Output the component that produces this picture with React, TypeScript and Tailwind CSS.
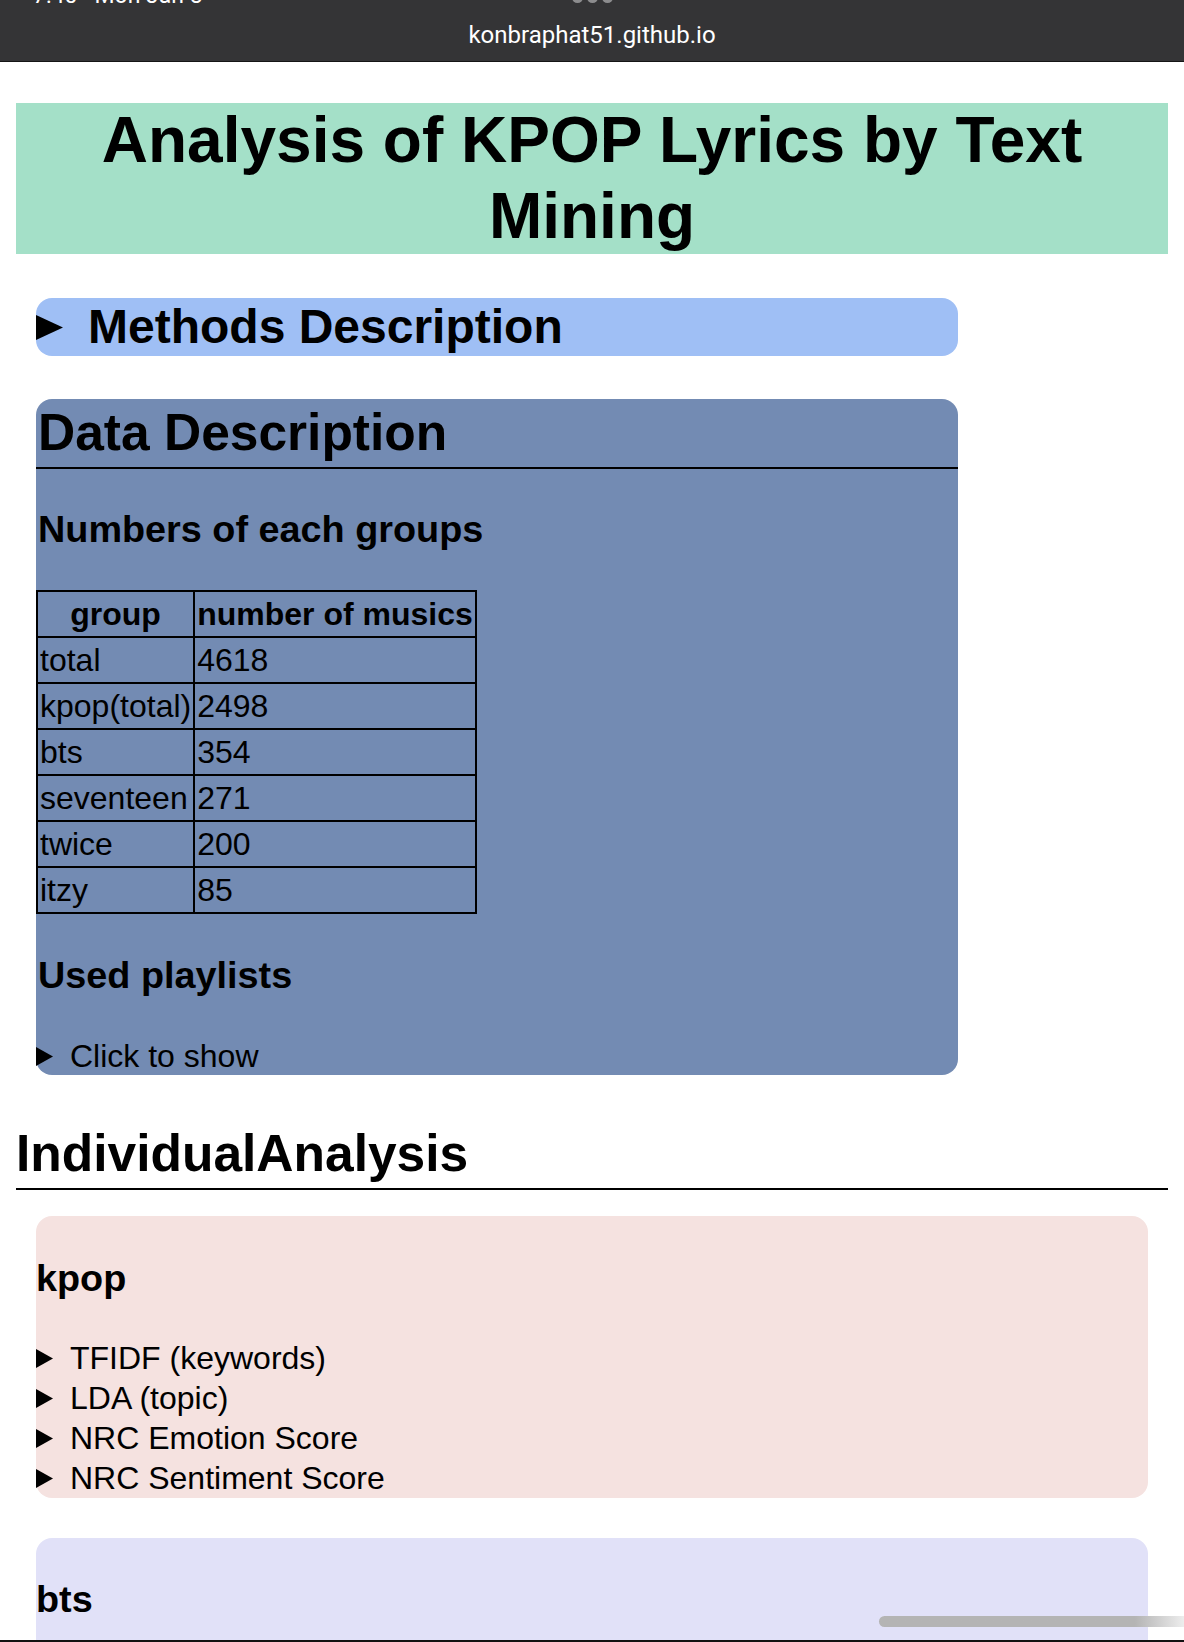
import React from "react";

const Tri = ({ w, h }: { w: number; h: number }) => (
  <svg width={w} height={h} viewBox={`0 0 ${w} ${h}`} className="shrink-0">
    <polygon points={`0,0 ${w},${h / 2} 0,${h}`} fill="#000" />
  </svg>
);

const rows: [string, string][] = [
  ["total", "4618"],
  ["kpop(total)", "2498"],
  ["bts", "354"],
  ["seventeen", "271"],
  ["twice", "200"],
  ["itzy", "85"],
];

const items = ["TFIDF (keywords)", "LDA (topic)", "NRC Emotion Score", "NRC Sentiment Score"];

export default function App() {
  return (
    <div className="relative w-[1184px] h-[1642px] overflow-hidden bg-white text-black font-['Liberation_Sans',Arial,sans-serif]">
      {/* Browser top bar */}
      <div className="h-[62px] bg-[#343436] border-b border-[#151515] flex flex-col overflow-hidden">
        <div className="h-[6px] flex items-start">
          <div className="w-[394px] pl-[33px] -mt-[16px]">
            <span className="block text-white text-[23px] leading-[23px] font-['Roboto',sans-serif] whitespace-pre">7:40   Mon Jan 8</span>
          </div>
          <div className="w-[396px] flex justify-center gap-[4px] -mt-[8px]">
            <span className="w-[11px] h-[11px] rounded-full bg-[#8c8c8e]" />
            <span className="w-[11px] h-[11px] rounded-full bg-[#8c8c8e]" />
            <span className="w-[11px] h-[11px] rounded-full bg-[#8c8c8e]" />
          </div>
        </div>
        <div className="flex-1 flex items-center justify-center pt-[2px]">
          <span className="text-white text-[24px] leading-[30px] font-['Roboto',sans-serif]">konbraphat51.github.io</span>
        </div>
      </div>

      <div className="px-4">
        {/* Title */}
        <h1 className="mt-[41px] bg-[#a4e0c8] text-center font-bold text-[64px] leading-[75.5px]">
          Analysis of KPOP Lyrics by Text Mining
        </h1>

        {/* Methods Description */}
        <div className="mt-[44px] ml-[20px] w-[922px] h-[58px] bg-[#9fbff5] rounded-[16px] flex items-center">
          <Tri w={27} h={25} />
          <h2 className="ml-[25px] text-[48px] font-bold leading-none">Methods Description</h2>
        </div>

        {/* Data Description */}
        <div className="mt-[43px] ml-[20px] w-[922px] bg-[#738bb3] rounded-[16px]">
          <h2 className="h-[70px] flex items-center border-b-2 border-black text-[51.5px] font-bold leading-none pl-[2px]">
            Data Description
          </h2>
          <h3 className="mt-[39px] mb-[39px] text-[37.8px] font-bold leading-[43px] pl-[2px]">Numbers of each groups</h3>
          <table className="border-collapse border-2 border-black text-[32px] leading-[38px]">
            <thead>
              <tr className="h-[46px]">
                <th className="border-2 border-black w-[157px] px-[2px] py-0 font-bold text-center">group</th>
                <th className="border-2 border-black w-[282px] px-[2px] py-0 font-bold text-left whitespace-nowrap">number of musics</th>
              </tr>
            </thead>
            <tbody>
              {rows.map(([g, n]) => (
                <tr key={g} className="h-[46px]">
                  <td className="border-2 border-black px-[2px] py-0">{g}</td>
                  <td className="border-2 border-black px-[2px] py-0">{n}</td>
                </tr>
              ))}
            </tbody>
          </table>
          <h3 className="mt-[40px] text-[37.8px] font-bold leading-[43px] pl-[2px]">Used playlists</h3>
          <div className="mt-[40px] h-[38px] flex items-center">
            <Tri w={17} h={19} />
            <span className="ml-[17px] text-[32px] leading-none">Click to show</span>
          </div>
        </div>

        {/* Individual Analysis */}
        <h2 className="mt-[45px] h-[70px] flex items-center border-b-2 border-black text-[51.5px] font-bold leading-none">
          IndividualAnalysis
        </h2>

        <div className="mt-[26px] mx-[20px] bg-[#f5e2e0] rounded-[16px]">
          <h3 className="pt-[41px] text-[37.8px] font-bold leading-[43px]">kpop</h3>
          <div className="mt-[38px]">
            {items.map((t) => (
              <div key={t} className="h-[40px] flex items-center">
                <Tri w={17} h={19} />
                <span className="ml-[17px] text-[32px] leading-none">{t}</span>
              </div>
            ))}
          </div>
        </div>

        <div className="mt-[40px] mx-[20px] bg-[#e1e1f8] rounded-[16px] h-[200px]">
          <h3 className="pt-[40px] text-[37.8px] font-bold leading-[43px]">bts</h3>
        </div>
      </div>

      {/* scroll indicator overlay */}
      <div className="absolute left-[879px] top-[1616px] w-[320px] h-[11px] rounded-full bg-gradient-to-r from-[#b4b4b4] from-80% to-white" />
      <div className="absolute left-0 bottom-0 w-full h-[2px] bg-[#111]" />
    </div>
  );
}
